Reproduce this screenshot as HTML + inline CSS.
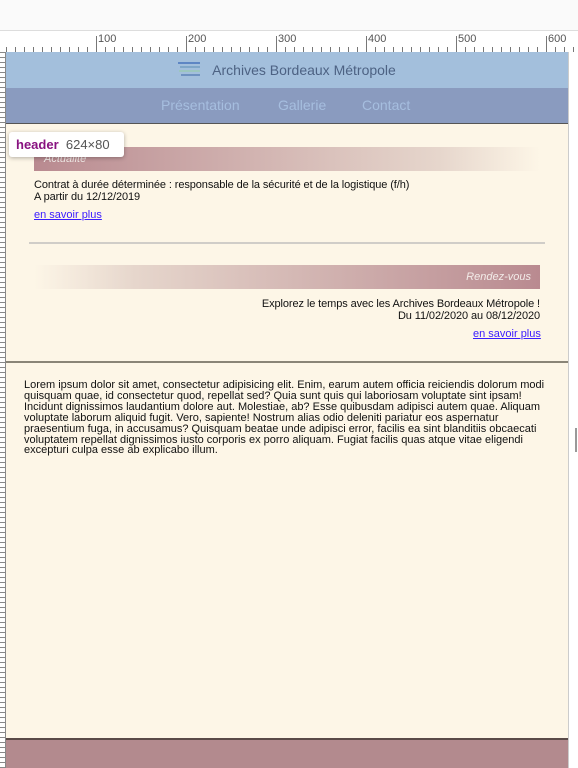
<!DOCTYPE html>
<html><head><meta charset="utf-8"><style>
*{margin:0;padding:0;box-sizing:border-box}
body{width:578px;height:768px;overflow:hidden;background:#fff;font-family:"Liberation Sans",sans-serif;position:relative}
.abs{position:absolute}
#top{left:0;top:0;width:578px;height:31px;background:#fafafa;border-bottom:1px solid #ddd}
#ruler{left:0;top:32px;width:578px;height:20px;background:#fff;
background-image:repeating-linear-gradient(90deg,#777 0 1px,transparent 1px 9px);background-size:100% 5px;background-repeat:no-repeat;background-position:6px 15px}
#lruler{left:0;top:52px;width:6px;height:716px;background:#fff;background-image:repeating-linear-gradient(180deg,#888 0 1px,transparent 1px 5px);border-right:1px solid #888}
.num{top:33px;font-size:11px;color:#555}
.maj{top:36px;width:1px;height:16px;background:#777}
#page{left:6px;top:52px;width:562px;height:716px;background:#fdf6e7}
#hdr{left:6px;top:52px;width:562px;height:36px;background:#a3bfdc;color:#4d6283;font-size:14px;text-align:center;line-height:36px}
#nav{left:6px;top:88px;width:562px;height:36px;background:#8a9bbf;border-bottom:1px solid #555;color:#a6bedf;font-size:14px;line-height:35px}
#nav span{position:absolute}
#tip{left:9px;top:132px;width:115px;height:25px;background:#fff;border-radius:3px;box-shadow:0 1px 4px rgba(0,0,0,.3);font-size:13px;line-height:25px;padding-left:7px;color:#555}
.bar{height:24px;color:#f3ece9;font-style:italic;font-size:11px;line-height:24px}
.t{font-size:11px;color:#111;line-height:12px;letter-spacing:-0.1px}
a{color:#3a1bff;font-size:11px;text-decoration:underline}
#sb{left:568px;top:52px;width:10px;height:716px;background:#fff;border-left:1px solid #ccc}
</style></head><body>
<div id="top" class="abs"></div>
<div id="ruler" class="abs"></div>
<div class="abs maj" style="left:96px"></div><div class="abs num" style="left:98px">100</div>
<div class="abs maj" style="left:186px"></div><div class="abs num" style="left:188px">200</div>
<div class="abs maj" style="left:276px"></div><div class="abs num" style="left:278px">300</div>
<div class="abs maj" style="left:366px"></div><div class="abs num" style="left:368px">400</div>
<div class="abs maj" style="left:456px"></div><div class="abs num" style="left:458px">500</div>
<div class="abs maj" style="left:546px"></div><div class="abs num" style="left:548px">600</div>
<div id="lruler" class="abs"></div>
<div id="page" class="abs"></div>
<div id="hdr" class="abs"><svg width="24" height="18" style="vertical-align:-3px;margin-right:10px"><rect x="0" y="2" width="22" height="2" fill="#5e86c4"/><rect x="2" y="6" width="20" height="2" fill="#7fa6c8"/><rect x="1" y="10" width="21" height="2" fill="#9cc6be"/><rect x="3" y="14" width="19" height="2" fill="#6f92c0"/></svg>Archives Bordeaux Métropole</div>
<div id="nav" class="abs"><span style="left:155px">Présentation</span><span style="left:272px">Gallerie</span><span style="left:356px">Contact</span></div>
<div class="abs bar" style="left:34px;top:147px;width:506px;background:linear-gradient(90deg,#b98a90,#e6d6cc 80%,rgba(253,246,231,0));padding-left:10px">Actualité</div>
<div id="tip" class="abs"><b style="color:#881280">header</b>&nbsp;&nbsp;624×80</div>
<div class="abs t" style="left:34px;top:179px">Contrat à durée déterminée : responsable de la sécurité et de la logistique (f/h)<br>A partir du 12/12/2019</div>
<a class="abs" style="left:34px;top:209px">en savoir plus</a>
<div class="abs" style="left:29px;top:242px;width:516px;height:2px;background:#d0cdc8"></div>
<div class="abs bar" style="left:34px;top:265px;width:506px;background:linear-gradient(270deg,#b98a90,#e6d6cc 80%,rgba(253,246,231,0));text-align:right;padding-right:9px">Rendez-vous</div>
<div class="abs t" style="left:34px;top:298px;width:506px;text-align:right">Explorez le temps avec les Archives Bordeaux Métropole !<br>Du 11/02/2020 au 08/12/2020</div>
<a class="abs" style="left:473px;top:328px">en savoir plus</a>
<div class="abs" style="left:6px;top:361px;width:562px;height:2px;background:#8a8577"></div>
<div class="abs t" style="left:24px;top:380px;width:540px;line-height:10.9px;font-size:11px;letter-spacing:0;white-space:nowrap">Lorem ipsum dolor sit amet, consectetur adipisicing elit. Enim, earum autem officia reiciendis dolorum modi<br>quisquam quae, id consectetur quod, repellat sed? Quia sunt quis qui laboriosam voluptate sint ipsam!<br>Incidunt dignissimos laudantium dolore aut. Molestiae, ab? Esse quibusdam adipisci autem quae. Aliquam<br>voluptate laborum aliquid fugit. Vero, sapiente! Nostrum alias odio deleniti pariatur eos aspernatur<br>praesentium fuga, in accusamus? Quisquam beatae unde adipisci error, facilis ea sint blanditiis obcaecati<br>voluptatem repellat dignissimos iusto corporis ex porro aliquam. Fugiat facilis quas atque vitae eligendi<br>excepturi culpa esse ab explicabo illum.</div>
<div class="abs" style="left:6px;top:738px;width:562px;height:30px;background:#b38a8e;border-top:2px solid #5a4a48"></div>
<div id="sb" class="abs"></div>
<div class="abs" style="left:575px;top:428px;width:2px;height:24px;background:#999"></div>
</body></html>
